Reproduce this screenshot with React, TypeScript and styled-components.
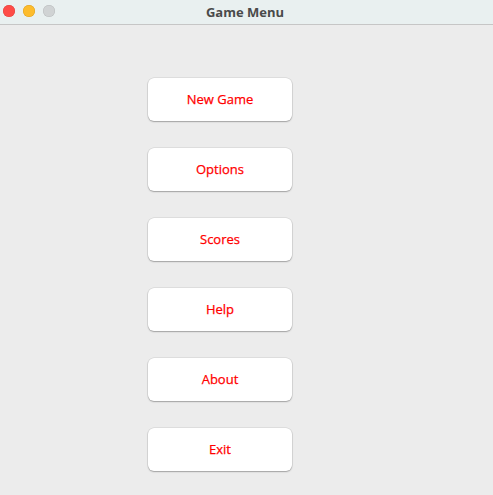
import React from "react";
import styled, { createGlobalStyle } from "styled-components";

const Global = createGlobalStyle`
  html, body { margin: 0; padding: 0; background: #ececec; }
  body { font-family: "Open Sans", "Liberation Sans", sans-serif; }
`;

const Window = styled.div`
  width: 493px;
  height: 495px;
  display: flex;
  flex-direction: column;
  background: #ececec;
  overflow: hidden;
`;

const TitleBar = styled.div`
  position: relative;
  height: 25px;
  flex: 0 0 25px;
  background: #e9f0f0;
  border-bottom: 1px solid #c6c6c6;
  box-sizing: border-box;
  display: flex;
  align-items: center;
  justify-content: center;
`;

const Lights = styled.div`
  position: absolute;
  left: 3px;
  top: 5px;
  display: flex;
  gap: 8px;
`;

const Light = styled.span<{ $color: string; $border: string }>`
  width: 12px;
  height: 12px;
  border-radius: 50%;
  background: ${(p) => p.$color};
  box-shadow: inset 0 0 0 0.5px ${(p) => p.$border};
`;

const Title = styled.div`
  font-family: "Open Sans", "Liberation Sans", sans-serif;
  font-weight: 700;
  font-size: 13px;
  color: #4a4a4a;
  margin-left: -3px;
`;

const Content = styled.div`
  flex: 1;
  display: flex;
  flex-direction: column;
  align-items: flex-start;
  padding-top: 53px;
  padding-left: 148px;
  gap: 27px;
`;

const MenuButton = styled.button`
  width: 144px;
  height: 43px;
  background: #ffffff;
  border: none;
  border-radius: 6px;
  box-shadow: 0 0 0 0.5px rgba(0, 0, 0, 0.12), 0 1px 1.5px rgba(0, 0, 0, 0.28);
  color: #ff0000;
  font-family: "Open Sans", "Liberation Sans", sans-serif;
  font-size: 13px;
  font-weight: 500;
  -webkit-text-stroke: 0.25px #ff0000;
  padding: 0 0 1px 0;
  cursor: pointer;
`;

const items = ["New Game", "Options", "Scores", "Help", "About", "Exit"];

export default function App() {
  return (
    <Window>
      <Global />
      <TitleBar>
        <Lights>
          <Light $color="#fe4c47" $border="#e0433e" />
          <Light $color="#fdbc2c" $border="#dea01e" />
          <Light $color="#d0d3d4" $border="#b9bcbd" />
        </Lights>
        <Title>Game Menu</Title>
      </TitleBar>
      <Content>
        {items.map((t) => (
          <MenuButton key={t}>{t}</MenuButton>
        ))}
      </Content>
    </Window>
  );
}
